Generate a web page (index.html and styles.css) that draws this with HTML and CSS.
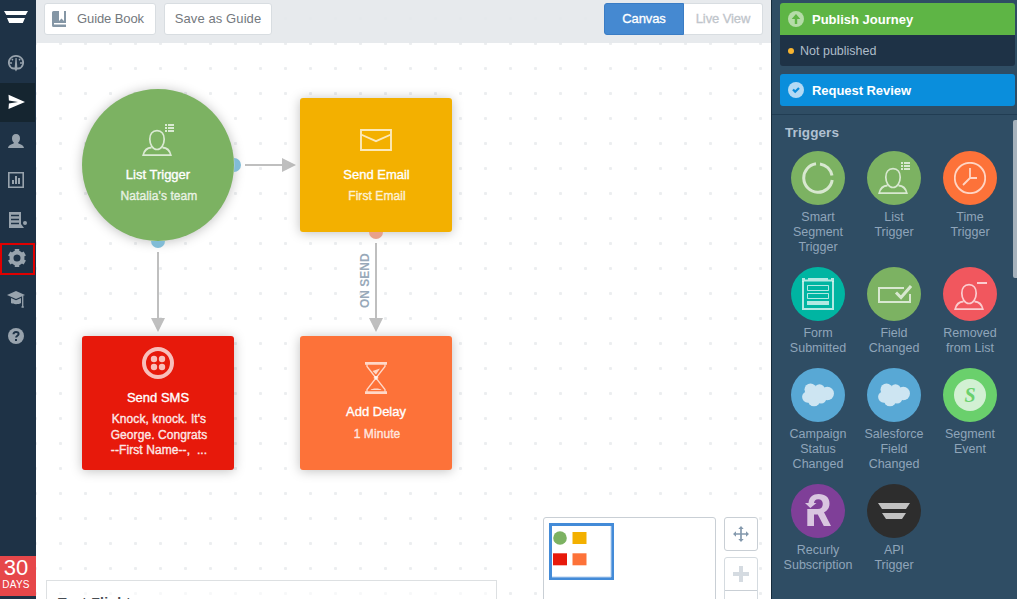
FILE: index.html
```html
<!DOCTYPE html>
<html lang="en">
<head>
<meta charset="utf-8">
<title>Journey</title>
<link rel="stylesheet" href="styles.css">
</head>
<body>
<svg class="defs" aria-hidden="true">
  <symbol id="person" viewBox="0 0 32 34">
    <path d="M15 7.700c4.600 0 7.200 3.500 7.200 8.500 0 5.600-3.200 10.300-7.200 10.300s-7.200-4.700-7.200-10.300c0-5 2.600-8.500 7.200-8.500z" fill="none" stroke="currentColor" stroke-width="1.700"/>
    <path d="M9.500 24.500c-4.500.3-7.200 2.500-8.300 7.600h27.600c-1.100-5.100-3.800-7.300-8.300-7.600" fill="none" stroke="currentColor" stroke-width="1.800"/>
  </symbol>
  <symbol id="list" viewBox="0 0 9 8">
    <path d="M0 0h2v2H0zM3 0h6v2H3zM0 3h2v2H0zM3 3h6v2H3zM0 6h2v2H0zM3 6h6v2H3z" fill="currentColor"/>
  </symbol>
  <symbol id="cloud" viewBox="0 0 32 24">
    <g fill="#cde5f2"><circle cx="8.500" cy="6.500" r="6"/><circle cx="17.500" cy="6.500" r="5.300"/><circle cx="25.300" cy="10.500" r="6.700"/><circle cx="5.800" cy="14" r="5.700"/><circle cx="12" cy="17" r="6.300"/><circle cx="19" cy="15" r="5.500"/><path d="M8 6h16v10H8z"/></g>
  </symbol>
</svg>
<div class="app">
  <nav class="nav">
    <div class="nav-logo"><svg width="24" height="13" viewBox="0 0 24 13"><path d="M0 0h24l-2.300 4H2.300zM3 7h18l-2.200 5H5.200z" fill="#fff"/></svg></div>
    <a class="nav-item"><svg width="18" height="18" viewBox="0 0 18 18"><path d="M6.500 14.800A7.200 6.700 0 1 1 11.500 14.800" fill="none" stroke="currentColor" stroke-width="1.700"/><path d="M8.500 4h1.100l.8 11-1.400 2.500L7.600 15z" fill="currentColor"/><path d="M3 9h2M13 9h2M4.800 5.200l1.200 1M13.200 5.200l-1.200 1" stroke="currentColor" stroke-width="1.500"/><path d="M5 13.500h8l-1.500 2h-5z" fill="currentColor"/></svg></a>
    <a class="nav-item active"><svg width="18" height="16" viewBox="0 0 18 16"><path d="M1.500.8L18 8 1.500 15l.4-5.500L11 8 1.900 6.500z" fill="currentColor"/></svg></a>
    <a class="nav-item"><svg width="16" height="14" viewBox="0 0 16 14"><path d="M8 0c2.700 0 4 1.700 4 4.200 0 2-.8 3.600-2 4.600.2 1.600 5.500 1.200 6 5.200H0c.5-4 5.800-3.600 6-5.200-1.200-1-2-2.600-2-4.600C4 1.700 5.300 0 8 0z" fill="currentColor"/></svg></a>
    <a class="nav-item"><svg width="16" height="16" viewBox="0 0 16 16"><path d="M.8.8h14.400v14.400H.8z" fill="none" stroke="currentColor" stroke-width="1.600"/><path d="M4 8h2v4H4zM7 4h2v8H7zM10 6h2v6h-2z" fill="currentColor"/></svg></a>
    <a class="nav-item list-item"><svg width="18" height="16" viewBox="0 0 18 16"><path d="M0 0h12v12l3 4H0z" fill="currentColor"/><path d="M2 3.500h8M2 7.500h8M2 11.500h8" stroke="#1e3246" stroke-width="1.500"/><circle cx="16" cy="11" r="2" fill="currentColor"/></svg></a>
    <a class="nav-item marked"><svg width="18" height="18" viewBox="0 0 18 18"><circle cx="9" cy="9" r="5.500" fill="none" stroke="currentColor" stroke-width="4"/><g stroke="currentColor" stroke-width="4.500"><path d="M9 0v4M9 14v4M1.200 4.500l3.500 2M13.300 11.500l3.500 2M1.200 13.500l3.500-2M13.300 6.500l3.500-2"/></g></svg></a>
    <a class="nav-item school"><svg width="18" height="17" viewBox="0 0 18 17"><path d="M9 0l9 4-9 4-9-4z" fill="currentColor"/><path d="M4 7l5 2.200L14 7v5c-2 1.600-8 1.600-10 0z" fill="currentColor"/><path d="M15.700 5v11M14.500 16h2.300" stroke="currentColor" stroke-width="1.300"/></svg></a>
    <a class="nav-item"><svg width="16" height="16" viewBox="0 0 16 16"><circle cx="8" cy="8" r="8" fill="currentColor"/><path d="M5.500 6.300C5.500 3.200 10.600 3.200 10.600 6c0 1.700-2.500 1.700-2.500 3.600M8 11v2" fill="none" stroke="#1e3246" stroke-width="2"/></svg></a>
    <div class="trial"><span class="trial-num">30</span><span class="trial-unit">DAYS</span></div>
  </nav>

  <main class="canvas">
    <header class="toolbar">
      <button class="btn guide"><svg width="14" height="16" viewBox="0 0 14 16"><path d="M1.500 0H7v10l2.500-2.500L12 10V0h2v12H2v1.500h12V16H1.500A1.500 1.500 0 0 1 0 14.500v-13A1.500 1.500 0 0 1 1.500 0z" fill="#8496a5"/></svg><span>Guide Book</span></button>
      <button class="btn save"><span>Save as Guide</span></button>
      <div class="toggle"><button class="seg on">Canvas</button><button class="seg">Live View</button></div>
    </header>

    <svg class="wires" width="735" height="599" viewBox="36 0 735 599">
      <path d="M245 165h40M158 252v67M376 243v76" stroke="#bfbfbf" stroke-width="2"/>
      <path d="M282 158l14 7-14 7zM151 318h14l-7 14zM369 318h14l-7 14z" fill="#bfbfbf"/>
    </svg>
    <span class="wire-label">ON SEND</span>

    <section class="node trigger">
      <div class="node-icon user-icon"><svg class="person" width="32" height="34"><use href="#person"/></svg><svg class="mark" width="9" height="8"><use href="#list"/></svg></div>
      <h3>List Trigger</h3><p class="team">Natalia's team</p>
    </section>
    <section class="node email">
      <svg class="node-icon" width="32" height="22" viewBox="0 0 32 22"><path d="M1 1h30v20H1zM1 5.500l15 6.700 15-6.700" fill="none" stroke="currentColor" stroke-width="1.900"/></svg>
      <h3>Send Email</h3><p>First Email</p>
    </section>
    <section class="node sms">
      <svg class="node-icon" width="32" height="32" viewBox="0 0 32 32"><circle cx="16" cy="16" r="14" fill="none" stroke="currentColor" stroke-width="4"/><g fill="currentColor"><circle cx="12" cy="12" r="3.200"/><circle cx="20" cy="12" r="3.200"/><circle cx="12" cy="20" r="3.200"/><circle cx="20" cy="20" r="3.200"/></g></svg>
      <h3>Send SMS</h3><p>Knock, knock. It's<br>George. Congrats<br>--First Name--, &nbsp;...</p>
    </section>
    <section class="node delay">
      <svg class="node-icon" width="22" height="32" viewBox="0 0 22 32"><path d="M0 0h22v2.700H0zM0 29.300h22V32H0z" fill="currentColor"/><path d="M2 2.500v2L20 27.500v2M20 2.500v2L2 27.500v2" fill="none" stroke="currentColor" stroke-width="1.300"/><path d="M7.500 9l7.500-2.500-4 6zM9.500 14h3l1 2-2.500 2-2.500-2zM5.500 28c1-2 10-2 11 0z" fill="currentColor"/></svg>
      <h3>Add Delay</h3><p class="minute">1 Minute</p>
    </section>
    <svg class="wires" width="735" height="599" viewBox="36 0 735 599">
      <path d="M234 158a7 7 0 0 1 0 14c.4-5 .4-9 0-14z" fill="#81bcd6"/>
      <path d="M151 241h14a7 7 0 0 1-14 0z" fill="#81bcd6"/>
      <path d="M369 232h14a7 7 0 0 1-14 0z" fill="#e8a18a"/>
    </svg>

    <section class="test-panel"><h2>Test Flight</h2></section>

    <aside class="overview">
      <div class="map"><svg width="65" height="57" viewBox="0 0 65 57"><path d="M1.500 1.500h62v54h-62z" fill="#fff" stroke="#438bd8" stroke-width="3"/><path d="M62 3v51H3" fill="none" stroke="#b5d0ef"/><circle cx="11" cy="15" r="6.800" fill="#7cb262"/><path d="M23.500 9h14v12h-14z" fill="#f3b000"/><path d="M4 30.300h14v12H4z" fill="#e7190b"/><path d="M23.500 30.300h14v12h-14z" fill="#fd7239"/></svg></div>
      <div class="zoom">
        <button class="tool"><svg width="16" height="16" viewBox="0 0 16 16"><path d="M8 2v12M2 8h12" stroke="#8499ad" stroke-width="1.700"/><path d="M8 0l2.700 3H5.300zM8 16l2.700-3H5.300zM0 8l3-2.700v5.400zM16 8l-3-2.700v5.400z" fill="#8499ad"/></svg></button>
        <div class="steps"><button class="step"><svg width="16" height="16" viewBox="0 0 16 16"><path d="M6 0h4v6h6v4h-6v6H6v-6H0V6h6z" fill="#d5dbe1"/></svg></button><button class="step lower"></button></div>
      </div>
    </aside>
  </main>

  <aside class="side">
    <div class="actions">
      <button class="action publish"><svg width="16" height="16" viewBox="0 0 16 16"><circle cx="8" cy="8" r="8" fill="#b5dca8"/><path d="M8 3l4.300 5H9.200v5H6.800V8H3.700z" fill="#5eb545"/></svg><span>Publish Journey</span></button>
      <div class="status"><i class="dot"></i><span>Not published</span></div>
      <button class="action review"><svg width="16" height="16" viewBox="0 0 16 16"><circle cx="8" cy="8" r="8" fill="#b3daf4"/><path d="M5 7.500l2.200 2.300L11 6" fill="none" stroke="#0a8edc" stroke-width="2.200"/></svg><span>Request Review</span></button>
    </div>
    <div class="palette">
      <i class="thumb"></i>
      <h2>Triggers</h2>
      <div class="grid">
        <div class="item"><span class="disc green"><svg width="32" height="32" viewBox="0 0 32 32"><path d="M18 1.900A14.300 14.300 0 0 1 30 13.500M30.200 18A14.300 14.300 0 1 1 14 1.800" fill="none" stroke="currentColor" stroke-width="3"/></svg></span><span>Smart<br>Segment<br>Trigger</span></div>
        <div class="item"><span class="disc green"><span class="user-icon"><svg class="person" width="32" height="34"><use href="#person"/></svg><svg class="mark" width="9" height="8"><use href="#list"/></svg></span></span><span>List<br>Trigger</span></div>
        <div class="item"><span class="disc orange"><svg width="32" height="32" viewBox="0 0 32 32"><circle cx="16" cy="16" r="15.200" fill="none" stroke="currentColor" stroke-width="1.800"/><path d="M16 6v10h7M16 16l-7 7" fill="none" stroke="currentColor" stroke-width="1.800"/></svg></span><span>Time<br>Trigger</span></div>
        <div class="item"><span class="disc teal"><svg width="32" height="32" viewBox="0 0 32 32"><path d="M1 3v28h30V3" fill="none" stroke="currentColor" stroke-width="2"/><path d="M0 0h3v1.500h3V0h20v1.500h3V0h3v3.500H0zM5 23h22v4H5z" fill="currentColor"/><path d="M5.500 7.500h21v5h-21zM5.500 15.500h21v5h-21z" fill="none" stroke="currentColor"/></svg></span><span>Form<br>Submitted</span></div>
        <div class="item"><span class="disc green"><svg class="field" width="34" height="18" viewBox="0 0 34 18"><path d="M26 3H1v14h31V9" fill="none" stroke="currentColor" stroke-width="2"/><path d="M18 7.500l5 5L33 1" fill="none" stroke="currentColor" stroke-width="3"/></svg></span><span>Field<br>Changed</span></div>
        <div class="item"><span class="disc rose"><span class="user-icon"><svg class="person" width="32" height="34"><use href="#person"/></svg><svg class="mark minus" width="10" height="2"><path d="M0 0h10v2H0z" fill="currentColor"/></svg></span></span><span>Removed<br>from List</span></div>
        <div class="item"><span class="disc sky"><svg width="32" height="24"><use href="#cloud"/></svg></span><span>Campaign<br>Status<br>Changed</span></div>
        <div class="item"><span class="disc sky"><svg width="32" height="24"><use href="#cloud"/></svg></span><span>Salesforce<br>Field<br>Changed</span></div>
        <div class="item"><span class="disc lime"><b class="seg-s">S</b></span><span>Segment<br>Event</span></div>
        <div class="item"><span class="disc violet"><svg class="recurly" width="26" height="32" viewBox="0 0 26 32"><path d="M0 9h3.500C4 3 8 0 13.500 0 20.500 0 24.500 3.500 24.500 9.500c0 4.200-2 7.200-5.500 8.700L26 32h-7.200l-6-11.500H9V32H2.300V15h10.500c3.300 0 5-1.900 5-5s-1.700-4.800-4.600-4.800c-2.600 0-4 1.300-4.200 3.800h2.500L5.300 14z" fill="currentColor"/></svg></span><span>Recurly<br>Subscription</span></div>
        <div class="item"><span class="disc black"><svg width="32" height="16" viewBox="0 0 32 16"><path d="M0 0h32l-4 6H4zM4 10h24l-4 6H8z" fill="#c1c1c1"/></svg></span><span>API<br>Trigger</span></div>
      </div>
    </div>
  </aside>
</div>
</body>
</html>
```
FILE: styles.css
```css
* { box-sizing: border-box; }
body { margin: 0; overflow: hidden; font-family: "Liberation Sans", Arial, sans-serif; font-size: 12px; }
h2, h3, p { margin: 0; }
svg { display: block; flex: none; }
button { font: inherit; margin: 0; padding: 0; border: 0; background: none; }
.defs { position: absolute; width: 0; height: 0; }
.app { display: flex; width: 1017px; height: 599px; overflow: hidden; }

/* Navigation rail */
.nav { width: 36px; background: #1e3246; display: flex; flex-direction: column; }
.nav-logo { height: 44px; padding: 11px 0 0 4px; }
.nav-item { height: 39px; width: 35px; padding: 0 3px 1px 0; display: flex; align-items: center; justify-content: center; color: #98a3ad; }
.nav-item.list-item { padding: 1px 0 0 0; }
.nav-item.school { padding-top: 4px; padding-bottom: 0; }
.nav-item.active { background: #152530; color: #fff; }
.nav-item.marked { height: 32px; margin: 4px 0 3px; border: 2px solid #e00000; padding-right: 2px; padding-bottom: 2px; }
.trial { margin-top: auto; margin-bottom: 3px; height: 40px; background: #e6474a; color: #fff; display: flex; flex-direction: column; align-items: center; padding-right: 4px; }
.trial-num { font-size: 22px; line-height: 24px; }
.trial-unit { font-size: 10px; line-height: 10px; letter-spacing: .2px; }

/* Canvas */
.canvas { position: relative; width: 735px; overflow: hidden; background: radial-gradient(circle at 12.500px 12.500px, #eceef0 1.300px, transparent 1.900px) 12px 6px / 25px 25px #fff; }
.toolbar { height: 43px; padding: 3px 8px; display: flex; align-items: flex-start; background: rgba(228, 232, 235, .9); }
.btn { height: 32px; border: 1px solid #d8dde1; border-radius: 3px; background: #fff; color: #74797e; font-size: 13px; display: flex; align-items: center; justify-content: center; padding-bottom: 1px; }
.guide { width: 112px; gap: 11px; margin-right: 8px; justify-content: flex-start; padding-left: 7px; }
.guide span { letter-spacing: -.1px; }
.save { width: 108px; letter-spacing: .1px; }
.toggle { display: flex; margin-left: auto; width: 159px; height: 32px; }
.seg { flex: 1; border: 1px solid #d8dde1; border-left: 0; border-radius: 0 3px 3px 0; background: #fff; color: #bfc5cb; font-size: 13px; letter-spacing: -.1px; padding-bottom: 1px; -webkit-text-stroke: .3px; }
.seg.on { flex: none; width: 80px; border: 1px solid #3a7cc4; border-radius: 3px 0 0 3px; background: #4589d1; color: #fff; }
.wires { position: absolute; inset: 0; }
.wire-label { position: absolute; left: 321px; top: 252px; height: 58px; writing-mode: vertical-rl; transform: rotate(180deg); font-size: 12px; font-weight: bold; line-height: 16px; text-align: center; color: #98a9b9; }
.node { position: absolute; width: 152px; height: 134px; border-radius: 3px; display: flex; flex-direction: column; align-items: center; color: rgba(255,255,255,.72); box-shadow: 0 1px 12px rgba(0,0,0,.25); text-align: center; }
.node h3 { font-size: 13px; line-height: 16px; font-weight: normal; color: #fff; -webkit-text-stroke: .35px; }
.node p { font-size: 12px; line-height: 16px; margin-top: 6px; padding-left: 2px; letter-spacing: .08px; -webkit-text-stroke: .45px; white-space: nowrap; }
.trigger { left: 46px; top: 89px; height: 152px; border-radius: 50%; background: #7cb262; padding-top: 34px; }
.trigger h3 { margin-top: 10px; }
.email { left: 264px; top: 98px; background: #f3b000; padding-top: 31px; }
.email h3 { margin-top: 16px; padding-left: 1px; }
.node.trigger p, .node.email p { margin-top: 5px; }
.sms { left: 46px; top: 336px; background: #e7190b; padding-top: 11px; }
.sms h3 { margin-top: 11px; }
.sms p { color: rgba(255,255,255,.82); line-height: 15.500px; }
.delay { left: 264px; top: 336px; background: #fd7239; padding-top: 26px; }
.delay h3 { margin-top: 10px; }
.user-icon { position: relative; width: 32px; height: 34px; }
.user-icon .mark { position: absolute; left: 23px; top: 1px; }
.user-icon .minus { top: 5px; }

.test-panel { position: absolute; left: 10px; top: 580px; width: 451px; height: 60px; padding: 14px 11px; border: 1px solid #dde0e2; background: rgba(255,255,255,.6); }
.test-panel h2 { font-size: 14px; line-height: 16px; letter-spacing: .3px; color: #474c52; }
.overview { position: absolute; left: 507px; top: 517px; display: flex; gap: 8px; }
.map { width: 173px; height: 110px; border: 1px solid #c9cfd5; border-radius: 3px; background: #fff; padding: 5px; }
.zoom { display: flex; flex-direction: column; gap: 6px; }
.tool { width: 34px; height: 34px; border: 1px solid #c9cfd5; border-radius: 3px; background: #fff; display: flex; align-items: center; justify-content: center; }
.steps { width: 34px; border: 1px solid #d5dbe0; border-radius: 3px; background: #fff; }
.step { display: flex; align-items: center; justify-content: center; width: 100%; height: 32px; }
.lower { border-top: 1px solid #c9cfd5; }

/* Palette */
.side { width: 246px; background: #2f4d64; border-left: 1px solid #152b3c; }
.actions { height: 115px; padding: 3px 2px 0 8px; border-bottom: 1px solid #213d53; }
.action { width: 100%; height: 32px; padding: 0 8px; display: flex; align-items: center; gap: 8px; border-radius: 3px; color: #fff; font-size: 13px; font-weight: bold; }
.publish { background: #5eb545; border-radius: 3px 3px 0 0; }
.review span { letter-spacing: -.05px; }
.status { height: 31px; margin-bottom: 8px; padding: 1px 8px 0; display: flex; align-items: center; gap: 6px; border-radius: 0 0 3px 3px; background: #1e3246; color: #aebdc9; font-size: 12.500px; }
.dot { width: 6px; height: 6px; border-radius: 50%; background: #f8b430; }
.review { background: #0a8edc; }
.palette { position: relative; padding: 10px 0 0 8px; }
.palette h2 { margin-left: 5px; font-size: 13.500px; line-height: 16px; color: #b1c1d2; letter-spacing: .1px; }
.thumb { position: absolute; right: 0; top: 5px; width: 4px; height: 158px; border-radius: 2px 0 0 2px; background: #a6b2bc; }
.grid { display: grid; grid-template-columns: repeat(3, 76px); margin-top: 10px; }
.item { display: flex; flex-direction: column; align-items: center; gap: 5px; padding-bottom: 12px; text-align: center; color: #8fa5ba; font-size: 12.500px; line-height: 15px; }
.disc { width: 54px; height: 54px; border-radius: 50%; display: flex; align-items: center; justify-content: center; color: rgba(255,255,255,.7); }
.disc .user-icon { margin-left: -1px; }
.field { margin-left: 2px; }
.recurly { margin-top: -2px; }
.green { background: #7cb262; }
.orange { background: #fd7239; }
.teal { background: #00b5a2; }
.rose { background: #f1575e; }
.sky { background: #58a8d5; }
.lime { background: #6ad06c; }
.violet { background: #7f3f98; }
.black { background: #2d2d2d; }
.seg-s { width: 32px; height: 32px; border-radius: 50%; background: #d2f0d3; color: #6ad06c; font-family: "Liberation Serif", serif; font-style: italic; font-size: 20px; line-height: 32px; text-align: center; }
```
